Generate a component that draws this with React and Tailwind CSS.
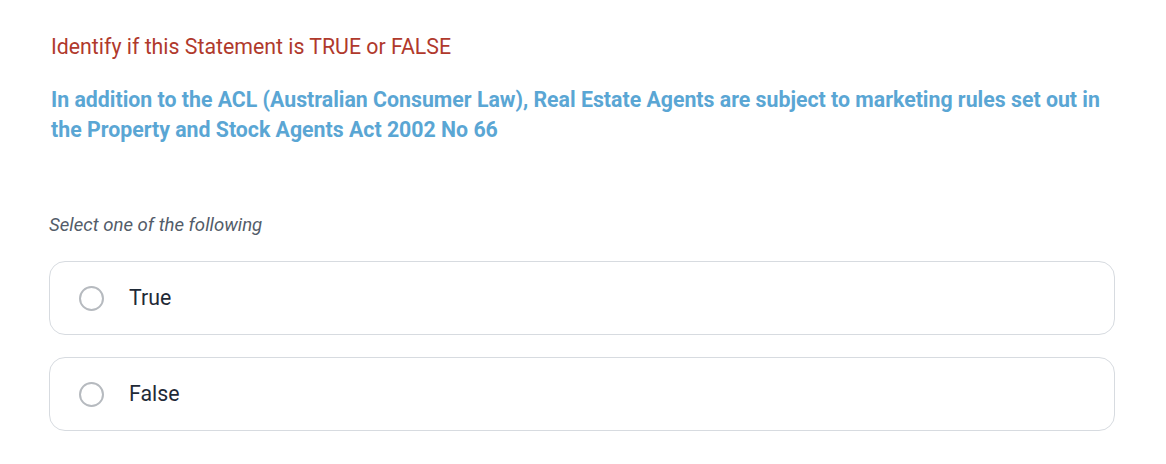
export default function App() {
  const options = ['True', 'False'];

  return (
    <div className="min-h-screen bg-white pl-[49px] pr-[51px] pt-[32px] font-['Roboto',sans-serif]">
      <p className="text-[21.3px] leading-[30px] text-[#b0392c] pl-[2px]">
        Identify if this Statement is TRUE or FALSE
      </p>
      <p className="mt-[23px] pl-[2px] text-[21.3px] leading-[30px] font-bold text-[#5aa6d4]">
        In addition to the ACL (Australian Consumer Law), Real Estate Agents are subject to marketing rules set out in
        the Property and Stock Agents Act 2002 No 66
      </p>

      <p className="mt-[67px] text-[18.6px] leading-[26px] italic text-[#535c69]">
        Select one of the following
      </p>

      <div className="mt-[23px] flex flex-col gap-[22px]">
        {options.map(opt => (
          <label
            key={opt}
            className="flex h-[74px] items-center rounded-[16px] border border-[#d7dbe0] pl-[29px] cursor-pointer"
          >
            <span className="h-[25px] w-[25px] rounded-full border-2 border-[#b6babf]" />
            <span className="ml-[25px] text-[21.3px] text-[#1f2a37]">{opt}</span>
          </label>
        ))}
      </div>
    </div>
  );
}
